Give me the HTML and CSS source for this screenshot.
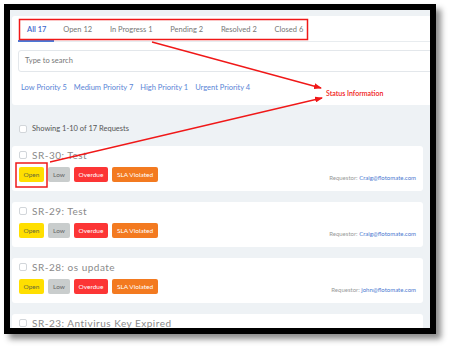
FILE: index.html
```html
<!DOCTYPE html>
<html lang="en">
<head>
  <meta charset="UTF-8" />
  <title>Requests</title>
  <link rel="stylesheet" href="styles.css">
</head>
<body>
  <div class="frame">
    <div class="screen">
      <div class="panel">
        <div class="tabs">
          <span class="tab active">All 17</span>
          <span class="tab">Open 12</span>
          <span class="tab">In Progress 1</span>
          <span class="tab">Pending 2</span>
          <span class="tab">Resolved 2</span>
          <span class="tab">Closed 6</span>
        </div>
        <div class="search">Type to search</div>
        <div class="priorities">
          <span>Low Priority 5</span>
          <span>Medium Priority 7</span>
          <span>High Priority 1</span>
          <span>Urgent Priority 4</span>
        </div>
      </div>

      <div class="showing"><span class="check"></span>Showing 1-10 of 17 Requests</div>

      <div class="card">
        <div class="title-row"><span class="check"></span><span class="title">SR-30: Test</span></div>
        <div class="meta-row">
          <span class="badge open">Open</span>
          <span class="badge low">Low</span>
          <span class="badge overdue">Overdue</span>
          <span class="badge sla">SLA Violated</span>
          <span class="requestor">Requestor: <a>Craig@flotomate.com</a></span>
        </div>
      </div>

      <div class="card">
        <div class="title-row"><span class="check"></span><span class="title">SR-29: Test</span></div>
        <div class="meta-row">
          <span class="badge open">Open</span>
          <span class="badge low">Low</span>
          <span class="badge overdue">Overdue</span>
          <span class="badge sla">SLA Violated</span>
          <span class="requestor">Requestor: <a>Craig@flotomate.com</a></span>
        </div>
      </div>

      <div class="card">
        <div class="title-row"><span class="check"></span><span class="title">SR-28: os update</span></div>
        <div class="meta-row">
          <span class="badge open">Open</span>
          <span class="badge low">Low</span>
          <span class="badge overdue">Overdue</span>
          <span class="badge sla">SLA Violated</span>
          <span class="requestor">Requestor: <a>john@flotomate.com</a></span>
        </div>
      </div>

      <div class="card">
        <div class="title-row"><span class="check"></span><span class="title">SR-23: Antivirus Key Expired</span></div>
      </div>
    </div>
  </div>

  <!-- annotation layer -->
  <svg class="notes" width="449" height="348" viewBox="0 0 449 348">
    <defs>
      <marker id="head" markerWidth="8" markerHeight="6" refX="7" refY="3" orient="auto" markerUnits="userSpaceOnUse">
        <path d="M0,0 L8,3 L0,6 Z" fill="#f01818"/>
      </marker>
    </defs>
    <rect x="19.5" y="19.5" width="288" height="20" fill="none" stroke="#f01818" stroke-width="1.5"/>
    <rect x="16" y="163" width="31" height="24" fill="none" stroke="#f01818" stroke-width="1.5"/>
    <line x1="152" y1="42" x2="321" y2="88" stroke="#f01818" stroke-width="1.3" marker-end="url(#head)"/>
    <line x1="50" y1="162" x2="322" y2="98" stroke="#f01818" stroke-width="1.3" marker-end="url(#head)"/>
    <text x="326" y="96" class="note-text">Status Information</text>
  </svg>
</body>
</html>
```

FILE: styles.css
```css
body {
  margin: 0;
  background: #fff;
  font-family: Lato, 'Open Sans', sans-serif;
  width: 449px;
  height: 348px;
  position: relative;
  overflow: hidden;
}
.frame {
  margin: 4px;
  width: 432px;
  height: 330px;
  box-sizing: border-box;
  border: 6px solid #000;
  box-shadow: 5px 5px 6px rgba(0, 0, 0, 0.45);
}
.screen {
  height: 100%;
  overflow: hidden;
  background: #eef2f5;
  padding-top: 6px;
  box-sizing: border-box;
}
.panel {
  margin-left: 2px;
  width: 440px;
  background: #fff;
  border-radius: 3px;
  padding: 0 6px 12px;
  box-sizing: border-box;
}
.tabs {
  display: flex;
  border-bottom: 1px solid #e8ecef;
}
.tab {
  padding: 9px 8.9px 5px;
  font-size: 7.5px;
  line-height: 10px;
  color: #777;
  border-bottom: 2px solid transparent;
  margin-bottom: -1px;
}
.tab:first-child {
  padding-left: 9px;
  padding-right: 8px;
}
.tab.active {
  color: #3b67cc;
  font-weight: 600;
  border-bottom-color: #4a78d8;
}
.search {
  margin-top: 8px;
  height: 22px;
  border: 1px solid #e3e7eb;
  border-radius: 3px;
  padding-left: 6px;
  font-size: 7.5px;
  line-height: 20px;
  color: #777;
  box-sizing: border-box;
}
.priorities {
  display: flex;
  gap: 7px;
  margin-top: 11px;
  padding-left: 3px;
  font-size: 7.5px;
  line-height: 10px;
  color: #5a85d6;
}
.showing {
  display: flex;
  align-items: center;
  gap: 5px;
  margin: 19px 0 12px 9px;
  font-size: 7.5px;
  line-height: 10px;
  color: #555;
}
.check {
  display: inline-block;
  width: 8px;
  height: 8px;
  background: #fff;
  border: 1px solid #d2d6da;
  border-radius: 2px;
  box-sizing: border-box;
}
.card {
  margin: 0 0 11px 2px;
  width: 411px;
  height: 45px;
  background: #fff;
  border-radius: 3px;
  padding: 3px 7px 9px;
  box-sizing: border-box;
}
.title-row {
  display: flex;
  align-items: center;
  gap: 5px;
  height: 12px;
}
.title {
  font-size: 10px;
  line-height: 12px;
  color: #8a8a8a;
  letter-spacing: 0.5px;
}
.meta-row {
  display: flex;
  align-items: flex-end;
  gap: 4px;
  margin-top: 6px;
}
.badge {
  height: 15px;
  line-height: 15px;
  font-size: 6.5px;
  border-radius: 2px;
  color: #fff;
  text-align: center;
}
.badge.open { background: #ffdf00; color: #6a6a3a; width: 25px; }
.badge.low { background: #c9cdcd; color: #666; width: 22px; }
.badge.overdue { background: #fc3535; width: 34px; }
.badge.sla { background: #f37a20; width: 46px; }
.requestor {
  margin-left: auto;
  font-size: 6px;
  line-height: 8px;
  color: #999;
}
.requestor a {
  color: #4a78d0;
}
.notes {
  position: absolute;
  left: 0;
  top: 0;
  pointer-events: none;
}
.note-text {
  font-family: Lato, sans-serif;
  font-size: 7px;
  font-weight: 600;
  fill: #f01818;
}
```
